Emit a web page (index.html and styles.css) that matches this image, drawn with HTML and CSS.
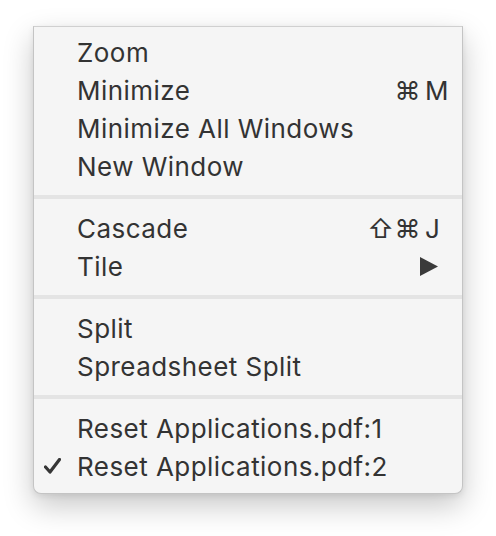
FILE: index.html
```html
<!DOCTYPE html>
<html>
<head>
<meta charset="utf-8">
<link rel="stylesheet" href="styles.css">
</head>
<body>
<div class="menu">
  <div class="item"><span class="check"></span><span class="label">Zoom</span></div>
  <div class="item"><span class="check"></span><span class="label">Minimize</span><span class="mods">⌘</span><span class="key">M</span></div>
  <div class="item"><span class="check"></span><span class="label">Minimize All Windows</span></div>
  <div class="item"><span class="check"></span><span class="label">New Window</span></div>
  <div class="sep"></div>
  <div class="item"><span class="check"></span><span class="label">Cascade</span><span class="mods">⇧⌘</span><span class="key">J</span></div>
  <div class="item"><span class="check"></span><span class="label">Tile</span><svg class="arrow" width="18" height="19" viewBox="0 0 18 19"><polygon points="0,0 18,9.5 0,19" fill="#3a3a3a"/></svg></div>
  <div class="sep"></div>
  <div class="item"><span class="check"></span><span class="label">Split</span></div>
  <div class="item"><span class="check"></span><span class="label">Spreadsheet Split</span></div>
  <div class="sep"></div>
  <div class="item"><span class="check"></span><span class="label">Reset Applications.pdf:1</span></div>
  <div class="item"><span class="check"><svg width="17" height="16" viewBox="0 0 17 16"><path d="M1.5 9 L6 14 L15.5 1.5" fill="none" stroke="#363636" stroke-width="3.2" stroke-linecap="round" stroke-linejoin="round"/></svg></span><span class="label">Reset Applications.pdf:2</span></div>
</div>
</body>
</html>
```
FILE: styles.css
```css
html, body {
  margin: 0;
  padding: 0;
  background: #ffffff;
}
body {
  width: 496px;
  height: 536px;
  overflow: hidden;
}
.menu {
  box-sizing: border-box;
  margin: 26px 0 0 33px;
  width: 430px;
  height: 468px;
  background: #f5f5f5;
  border: 1px solid #c4c4c4;
  border-top-color: #d0d0d0;
  border-radius: 0 0 8px 8px;
  box-shadow: 0 12px 30px rgba(0, 0, 0, 0.22), 0 2px 6px rgba(0, 0, 0, 0.08);
  padding-top: 6px;
  font-family: Inter, "Liberation Sans", sans-serif;
  font-size: 26px;
  letter-spacing: 0.45px;
  color: #333333;
}
.item {
  display: flex;
  align-items: center;
  height: 38px;
}
.check {
  width: 43px;
  flex: none;
  display: flex;
  justify-content: flex-end;
  padding-right: 16px;
  box-sizing: border-box;
}
.check svg {
  display: block;
}
.label {
  flex: 1;
  white-space: nowrap;
}
.mods {
  text-align: right;
}
.key {
  width: 22px;
  margin-left: 4px;
  margin-right: 15px;
}
.arrow {
  margin-right: 24px;
  display: block;
}
.sep {
  height: 4px;
  margin: 10px 0;
  background: #e4e4e4;
}
```
